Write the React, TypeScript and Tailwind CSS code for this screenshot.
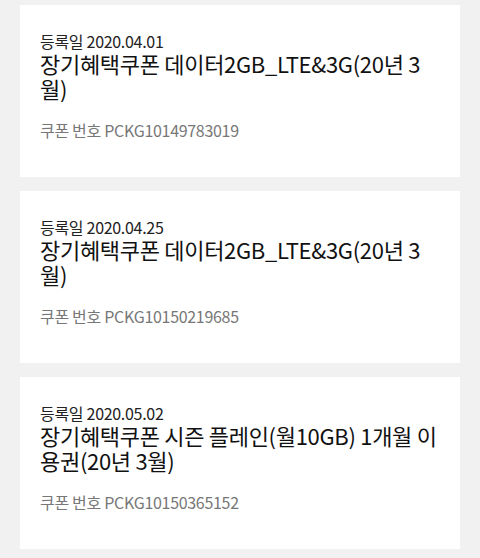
const coupons = [
  {
    date: "2020.04.01",
    title: "장기혜택쿠폰 데이터2GB_LTE&3G(20년 3월)",
    no: "PCKG10149783019",
  },
  {
    date: "2020.04.25",
    title: "장기혜택쿠폰 데이터2GB_LTE&3G(20년 3월)",
    no: "PCKG10150219685",
  },
  {
    date: "2020.05.02",
    title: "장기혜택쿠폰 시즌 플레인(월10GB) 1개월 이용권(20년 3월)",
    no: "PCKG10150365152",
  },
];

function CouponCard({ date, title, no }: { date: string; title: string; no: string }) {
  return (
    <div className="bg-white px-5 pt-[26px] pb-[37px]">
      <p className="text-[16px] leading-[20px] text-[#222] tracking-[-0.3px]">등록일 {date}</p>
      <p className="text-[22px] leading-[25px] text-[#111] tracking-[-0.3px]">{title}</p>
      <p className="mt-[19px] text-[16px] leading-[20px] text-[#777] tracking-[-0.3px]">쿠폰 번호 {no}</p>
    </div>
  );
}

export default function App() {
  return (
    <div
      className="min-h-[558px] bg-[#f1f1f1] px-5 pt-[5px]"
      style={{ fontFamily: '"Noto Sans CJK KR", "Noto Sans", sans-serif' }}
    >
      <div className="flex flex-col gap-[14px]">
        {coupons.map((c) => (
          <CouponCard key={c.no} {...c} />
        ))}
      </div>
    </div>
  );
}
